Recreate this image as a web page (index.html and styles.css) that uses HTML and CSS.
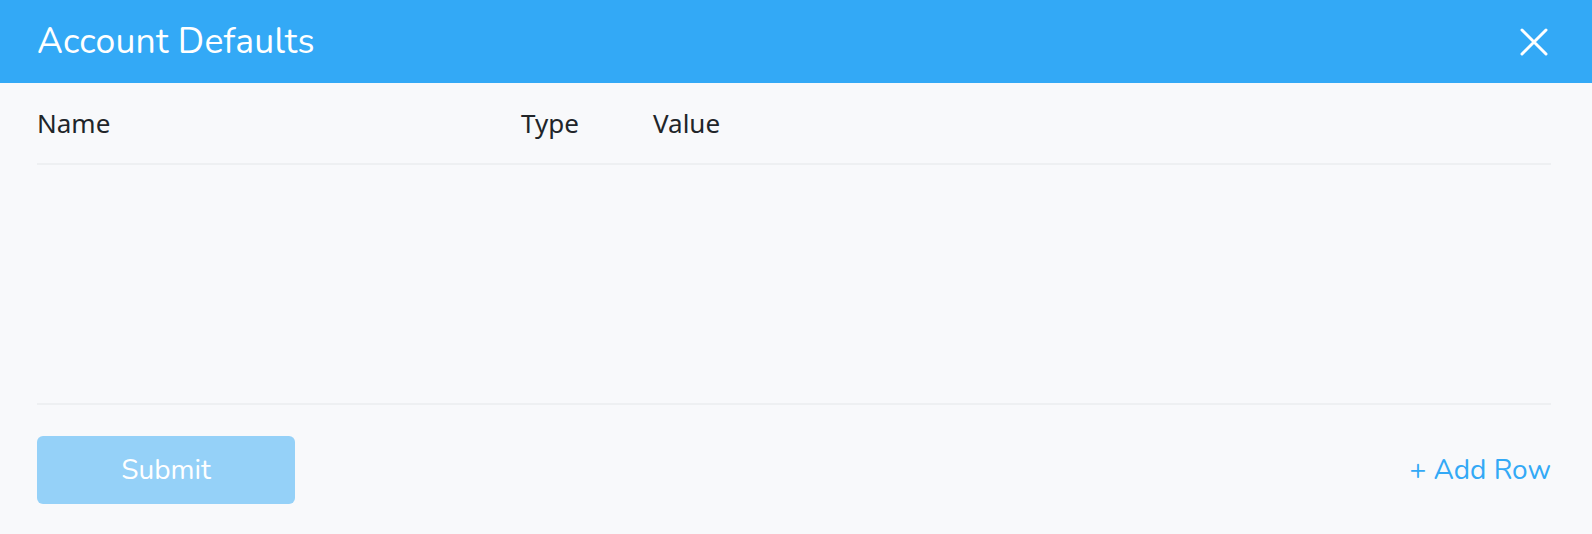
FILE: index.html
```html
<!DOCTYPE html>
<html>
<head>
<meta charset="utf-8">
<link rel="stylesheet" href="styles.css">
</head>
<body>
<div class="modal">
  <header class="modal-header">
    <h1 class="modal-title">Account Defaults</h1>
    <button class="close-btn" aria-label="Close">
      <svg width="28" height="28" viewBox="0 0 28 28"><path d="M2 2 L26 26 M26 2 L2 26" stroke="#fff" stroke-width="3" stroke-linecap="round"/></svg>
    </button>
  </header>
  <div class="modal-body">
    <div class="table-head">
      <span class="col">Name</span>
      <span class="col">Type</span>
      <span class="col">Value</span>
    </div>
    <div class="table-rows"></div>
    <div class="modal-footer">
      <button class="submit-btn" disabled>Submit</button>
      <a class="add-row">+ Add Row</a>
    </div>
  </div>
</div>
</body>
</html>
```
FILE: styles.css
```css
* { box-sizing: border-box; }
html, body { margin: 0; padding: 0; }
body {
  width: 1592px;
  height: 534px;
  background: #f8f9fb;
  font-family: "Nunito", "Lato", "Noto Sans", sans-serif;
  overflow: hidden;
}
.modal { display: flex; flex-direction: column; height: 534px; }
.modal-header {
  height: 83px;
  background: #33a9f6;
  display: flex;
  align-items: center;
  justify-content: space-between;
  padding: 0 44px 0 37px;
}
.modal-title {
  margin: 0;
  font-weight: 400;
  font-size: 35.5px;
  color: #fff;
  letter-spacing: 0.2px;
}
.close-btn {
  background: none;
  border: none;
  padding: 0;
  width: 28px;
  height: 28px;
  display: flex;
  cursor: pointer;
}
.modal-body {
  padding: 0 41px 0 37px;
  display: flex;
  flex-direction: column;
  flex: 1;
}
.table-head {
  display: grid;
  grid-template-columns: 484px 132px 1fr;
  height: 82px;
  align-items: center;
  border-bottom: 2px solid #eef0f2;
  font-family: "Noto Sans", sans-serif;
  font-size: 26px;
  font-weight: 400;
  color: #212529;
}
.table-rows {
  height: 240px;
  border-bottom: 2px solid #eef0f2;
}
.modal-footer {
  display: flex;
  justify-content: space-between;
  align-items: center;
  padding-top: 31px;
}
.submit-btn {
  width: 258px;
  height: 68px;
  border: none;
  border-radius: 6px;
  background: #95d1f8;
  color: #fff;
  font-family: "Nunito", "Lato", "Noto Sans", sans-serif;
  font-size: 28px;
}
.add-row {
  color: #33a9f6;
  font-size: 28px;
  cursor: pointer;
}
```
